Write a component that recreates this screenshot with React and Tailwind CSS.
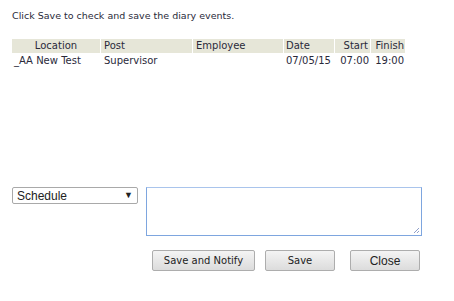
const rows = [
  { location: '_AA New Test', post: 'Supervisor', employee: '', date: '07/05/15', start: '07:00', finish: '19:00' },
];

function Btn({ children, className = '' }) {
  return (
    <button
      type="button"
      className={`h-[21px] border border-[#adadad] rounded-[2px] bg-gradient-to-b from-[#f4f4f4] to-[#dcdcdc] text-[#222] leading-none ${className}`}
    >
      {children}
    </button>
  );
}

export default function App() {
  return (
    <div className="w-[454px] h-[301px] bg-white px-3 pt-[9px] text-[#2a2a3a] text-[10px] font-['DejaVu_Sans',Verdana,sans-serif]">
      <p className="leading-[13px] text-[9.5px]">Click Save to check and save the diary events.</p>

      <table className="mt-[17px] w-[393px] border-separate border-spacing-0 table-fixed">
        <colgroup>
          <col className="w-[89px]" />
          <col className="w-[92px]" />
          <col className="w-[91px]" />
          <col className="w-[51px]" />
          <col className="w-[36px]" />
          <col className="w-[34px]" />
        </colgroup>
        <thead>
          <tr className="h-[14px] leading-[14px]">
            <th className="bg-[#e6e6d8] font-normal text-center border-r border-white">Location</th>
            <th className="bg-[#e6e6d8] font-normal text-left pl-[3px] border-r border-white">Post</th>
            <th className="bg-[#e6e6d8] font-normal text-left pl-[3px] border-r border-white">Employee</th>
            <th className="bg-[#e6e6d8] font-normal text-left pl-[2px] border-r border-white">Date</th>
            <th className="bg-[#e6e6d8] font-normal text-right pr-[2px] border-r border-white">Start</th>
            <th className="bg-[#e6e6d8] font-normal text-right pr-[1px]">Finish</th>
          </tr>
        </thead>
        <tbody>
          {rows.map((r, i) => (
            <tr key={i} className="h-[16px] leading-[16px]">
              <td className="pl-[2px] whitespace-nowrap">{r.location}</td>
              <td className="pl-[3px]">{r.post}</td>
              <td className="pl-[3px]">{r.employee}</td>
              <td className="pl-[2px]">{r.date}</td>
              <td className="text-right pr-[2px]">{r.start}</td>
              <td className="text-right pr-[1px]">{r.finish}</td>
            </tr>
          ))}
        </tbody>
      </table>

      <div className="mt-[118px] flex gap-2 items-start">
        <div className="w-[126px] h-[17px] border border-[#a9a9a9] rounded-[2px] flex items-center justify-between pl-[4px] pr-[4px] font-['Liberation_Sans',Arial,sans-serif] text-[12px] text-[#222]">
          <span>Schedule</span>
          <span className="text-[9px] leading-none">▼</span>
        </div>
        <div className="relative w-[276px] h-[49px] border border-[#7ea6df] border-t-[#a9c4ec]">
          <svg className="absolute right-[1px] bottom-[1px]" width="7" height="7" viewBox="0 0 7 7">
            <path d="M6 1L1 6M6 4L4 6" stroke="#8f9fc9" strokeWidth="1" />
          </svg>
        </div>
      </div>

      <div className="mt-[14px] flex justify-end pr-[22px]">
        <Btn className="w-[103px] text-[10px]">Save and Notify</Btn>
        <Btn className="ml-[10px] w-[70px] text-[10px]">Save</Btn>
        <Btn className="ml-[15px] w-[70px] text-[12px] font-['Liberation_Sans',Arial,sans-serif]">Close</Btn>
      </div>
    </div>
  );
}
